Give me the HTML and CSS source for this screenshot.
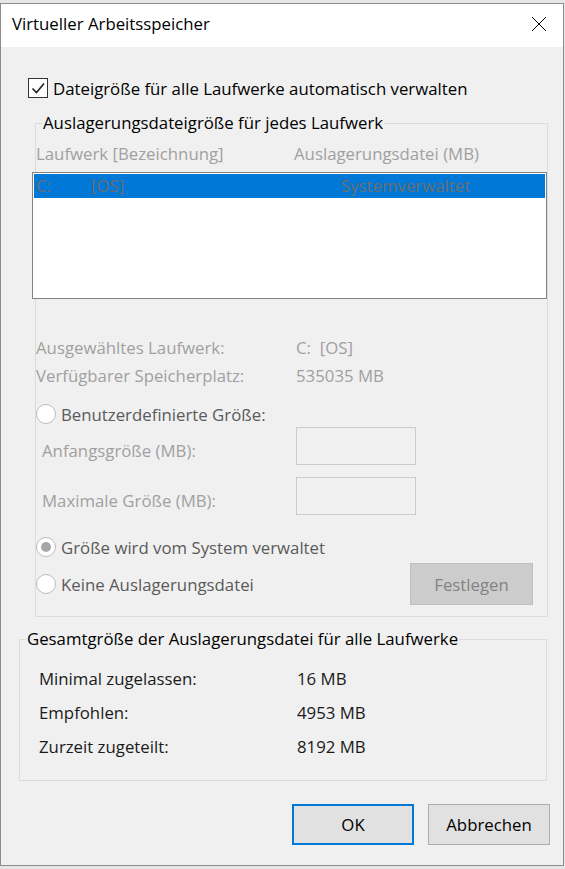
FILE: index.html
```html
<!DOCTYPE html>
<html lang="de">
<head>
<meta charset="utf-8">
<title>Virtueller Arbeitsspeicher</title>
<link rel="stylesheet" href="styles.css">
</head>
<body>
<div class="window">
  <div class="titlebar">
    <span class="title">Virtueller Arbeitsspeicher</span>
    <svg class="close" width="16" height="16" viewBox="0 0 16 16"><path d="M1 1L15 15M15 1L1 15" stroke="#000" stroke-width="1" fill="none"/></svg>
  </div>
  <div class="content">
    <div class="auto">
      <span class="checkbox"><svg width="18" height="18" viewBox="0 0 18 18"><path d="M3.5 9.5L7.5 13.5L15 4.5" stroke="#222" stroke-width="1.6" fill="none"/></svg></span>
      <span class="auto-label">Dateigröße für alle Laufwerke automatisch verwalten</span>
    </div>

    <fieldset class="group group-drives">
      <legend>Auslagerungsdateigröße für jedes Laufwerk</legend>
      <div class="cols">
        <span class="col-a">Laufwerk [Bezeichnung]</span>
        <span class="col-b">Auslagerungsdatei (MB)</span>
      </div>
      <div class="listbox">
        <div class="row selected">
          <span class="cell-drive">C:</span>
          <span class="cell-name">[OS]</span>
          <span class="cell-size">Systemverwaltet</span>
        </div>
      </div>

      <div class="info">
        <div class="info-row"><span class="info-label">Ausgewähltes Laufwerk:</span><span class="info-value">C:&nbsp; [OS]</span></div>
        <div class="info-row"><span class="info-label">Verfügbarer Speicherplatz:</span><span class="info-value">535035 MB</span></div>
      </div>

      <div class="radio-row custom">
        <span class="radio"></span><span class="radio-label">Benutzerdefinierte Größe:</span>
      </div>
      <div class="field-row first">
        <span class="field-label">Anfangsgröße (MB):</span><span class="field-box"></span>
      </div>
      <div class="field-row">
        <span class="field-label">Maximale Größe (MB):</span><span class="field-box"></span>
      </div>
      <div class="radio-row system">
        <span class="radio checked"></span><span class="radio-label">Größe wird vom System verwaltet</span>
      </div>
      <div class="radio-row none">
        <span class="radio"></span><span class="radio-label">Keine Auslagerungsdatei</span>
        <span class="btn-set">Festlegen</span>
      </div>
    </fieldset>

    <fieldset class="group group-total">
      <legend>Gesamtgröße der Auslagerungsdatei für alle Laufwerke</legend>
      <div class="total-row"><span class="total-label">Minimal zugelassen:</span><span>16 MB</span></div>
      <div class="total-row"><span class="total-label">Empfohlen:</span><span>4953 MB</span></div>
      <div class="total-row"><span class="total-label">Zurzeit zugeteilt:</span><span>8192 MB</span></div>
    </fieldset>

    <div class="buttons">
      <span class="btn btn-default">OK</span>
      <span class="btn">Abbrechen</span>
    </div>
  </div>
</div>
</body>
</html>
```

FILE: styles.css
```css
html, body {
  margin: 0;
  padding: 0;
}
body {
  width: 565px;
  height: 869px;
  background: #e6e6e6;
  font-family: "Open Sans", "Noto Sans", sans-serif;
  font-size: 16.8px;
  color: #000;
  overflow: hidden;
}
.window {
  box-sizing: border-box;
  width: 564px;
  height: 863px;
  margin-top: 3px;
  border: 1px solid #8c8c8c;
  background: #f0f0f0;
  display: flex;
  flex-direction: column;
}
.titlebar {
  box-sizing: border-box;
  height: 43px;
  background: #fff;
  display: flex;
  align-items: center;
  justify-content: space-between;
  padding: 0 16px 4px 11px;
  flex: none;
}
.title {
  font-size: 16.8px;
}
.close {
  display: block;
}
.content {
  flex: 1;
  display: flex;
  flex-direction: column;
}
.auto {
  display: flex;
  align-items: center;
  margin: 31px 0 0 27px;
  height: 20px;
}
.checkbox {
  box-sizing: border-box;
  width: 20px;
  height: 20px;
  border: 1px solid #333;
  background: #fff;
  display: flex;
  align-items: center;
  justify-content: center;
}
.auto-label {
  margin-left: 5px;
}
.group {
  margin: 0;
  padding: 0;
  border: 1px solid #dcdcdc;
  min-width: 0;
}
.group legend {
  padding: 0 1px;
  margin-left: 6px;
  line-height: 22px;
  color: #000;
}
.group-drives {
  margin: 14px 15px 0 34px;
  height: 505px;
  box-sizing: border-box;
}
.cols {
  display: flex;
  line-height: 22px;
  margin-top: 9px;
  color: #a0a0a0;
}
.col-a {
  width: 258px;
}
.listbox {
  box-sizing: border-box;
  margin: 7px 0 0 -4px;
  height: 127px;
  border: 1px solid #828282;
  background: #fff;
  padding: 1px 1px 0 1px;
}
.row {
  display: flex;
  height: 24px;
  line-height: 24px;
  color: #6d6d6d;
}
.row.selected {
  background: #0078d7;
}
.cell-drive {
  margin-left: 2px;
  width: 55px;
}
.cell-name {
  width: 250px;
}
.info {
  margin-top: 38px;
  color: #a0a0a0;
}
.info-row {
  display: flex;
  line-height: 22px;
  height: 28px;
}
.info-label {
  width: 260px;
}
.radio-row {
  display: flex;
  align-items: center;
  height: 22px;
  color: #5a5a5a;
}
.radio {
  box-sizing: border-box;
  width: 20px;
  height: 20px;
  border-radius: 50%;
  border: 1px solid #bcbcbc;
  background: #fff;
  flex: none;
  display: flex;
  align-items: center;
  justify-content: center;
}
.radio.checked::after {
  content: "";
  width: 10px;
  height: 10px;
  border-radius: 50%;
  background: #a6a6a6;
}
.radio-label {
  margin-left: 5px;
}
.custom {
  margin-top: 10px;
}
.field-row {
  display: flex;
  align-items: center;
  height: 38px;
  color: #a0a0a0;
}
.field-row.first {
  margin-top: 2px;
}
.field-row + .field-row {
  margin-top: 12px;
}
.field-label {
  width: 254px;
  margin-left: 6px;
  padding-top: 8px;
}
.field-box {
  box-sizing: border-box;
  width: 120px;
  height: 38px;
  border: 1px solid #cccccc;
  background: #f0f0f0;
}
.system {
  margin-top: 21px;
}
.none {
  margin-top: 15px;
}
.btn-set {
  box-sizing: border-box;
  margin-left: auto;
  margin-right: 14px;
  width: 123px;
  height: 42px;
  background: #cccccc;
  border: 1px solid #bfbfbf;
  color: #838383;
  display: flex;
  align-items: center;
  justify-content: center;
}
.group-total {
  margin: 11px 16px 0 18px;
  height: 153px;
  box-sizing: border-box;
}
.total-row {
  display: flex;
  line-height: 22px;
  height: 34px;
  margin-left: 19px;
  color: #1a1a1a;
}
.total-row:first-of-type {
  margin-top: 18px;
}
.total-label {
  width: 258px;
}
.buttons {
  display: flex;
  justify-content: flex-end;
  gap: 14px;
  margin: 23px 13px 0 0;
}
.btn {
  box-sizing: border-box;
  width: 122px;
  height: 41px;
  background: #e1e1e1;
  border: 1px solid #adadad;
  display: flex;
  align-items: center;
  justify-content: center;
  color: #000;
}
.btn-default {
  border: 2px solid #0078d7;
}
```
